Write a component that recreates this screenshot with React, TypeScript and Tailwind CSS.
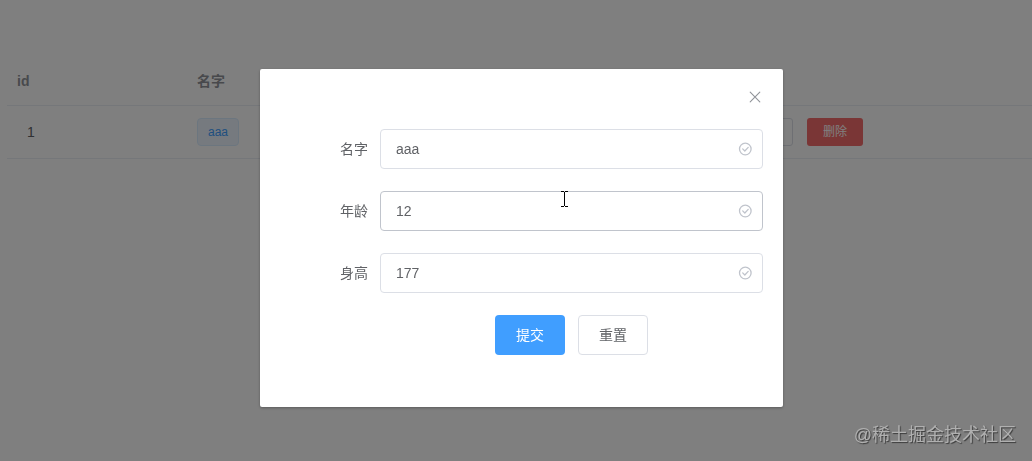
import { useState } from 'react';

type Person = {
  id: number;
  name: string;
  age: string;
  height: string;
};

type FieldKey = 'name' | 'age' | 'height';

const fields: { key: FieldKey; label: string; active?: boolean }[] = [
  { key: 'name', label: '名字' },
  { key: 'age', label: '年龄', active: true },
  { key: 'height', label: '身高' },
];

const people: Person[] = [{ id: 1, name: 'aaa', age: '12', height: '177' }];

function CloseIcon() {
  return (
    <svg width="12" height="12" viewBox="0 0 12 12" fill="none" stroke="currentColor" strokeWidth="1.1" strokeLinecap="round">
      <path d="M1.2 1.2l9.6 9.6M10.8 1.2L1.2 10.8" />
    </svg>
  );
}

function CircleCheckIcon() {
  return (
    <svg width="14" height="14" viewBox="0 0 14 14" fill="none" stroke="currentColor" strokeLinecap="round" strokeLinejoin="round">
      <circle cx="7.3" cy="7" r="5.8" strokeWidth="1.3" />
      <path d="M4.7 6.9l2.1 2.1 3.4-3.6" strokeWidth="1.3" />
    </svg>
  );
}

function TextCursor() {
  return (
    <svg width="7" height="16" viewBox="0 0 7 16" className="pointer-events-none absolute top-0 left-[181px]" shapeRendering="crispEdges">
      <path d="M0 0h3v1H0zM4 0h3v1H4zM3 1h1v14H3zM0 15h3v1H0zM4 15h3v1H4z" fill="#000" />
    </svg>
  );
}

function PeopleTable() {
  return (
    <table className="w-full table-fixed border-collapse text-left text-[#606266]">
      <thead>
        <tr className="border-b border-[#ebeef5] text-[#909399]">
          <th className="w-[180px] px-2.5 py-3 leading-6">id</th>
          <th className="w-[180px] px-2.5 py-3 leading-6">名字</th>
          <th className="w-[180px] px-2.5 py-3 leading-6">年龄</th>
          <th className="w-[180px] px-2.5 py-3 leading-6">身高</th>
          <th className="px-2.5 py-3 leading-6">操作</th>
        </tr>
      </thead>
      <tbody>
        {people.map((person) => (
          <tr key={person.id} className="border-b border-[#ebeef5]">
            <td className="py-3 pr-2.5 pl-5 leading-6">{person.id}</td>
            <td className="px-2.5 py-3">
              <span className="inline-flex h-7 items-center rounded border border-[#d9ecff] bg-[#ecf5ff] px-2.5 text-xs text-[#409eff]">
                {person.name}
              </span>
            </td>
            <td className="px-2.5 py-3">{person.age}</td>
            <td className="px-2.5 py-3">{person.height}</td>
            <td className="px-2.5 py-3">
              <div className="flex gap-3.5">
                <button type="button" className="h-7 w-14 rounded-[3px] border border-[#dcdfe6] bg-white text-xs">
                  编辑
                </button>
                <button type="button" className="h-7 w-14 rounded-[3px] bg-[#f56c6c] text-xs text-white">
                  删除
                </button>
              </div>
            </td>
          </tr>
        ))}
      </tbody>
    </table>
  );
}

function EditDialog({ person }: { person: Person }) {
  const [form, setForm] = useState<Person>(person);

  return (
    <div
      role="dialog"
      aria-modal="true"
      aria-label="编辑"
      className="relative w-full rounded-xs bg-white px-5 pt-[60px] pb-[52px] shadow-[0_1px_3px_rgba(0,0,0,0.3)]"
    >
      <button type="button" aria-label="关闭" className="absolute top-[22px] right-[22px] text-[#909399]">
        <CloseIcon />
      </button>

      <form className="flex flex-col gap-[22px]" onSubmit={(e) => e.preventDefault()}>
        {fields.map((field) => (
          <div key={field.key} className="flex items-center">
            <label htmlFor={field.key} className="w-25 shrink-0 pr-3 text-right">
              {field.label}
            </label>
            <div className="relative flex-1">
              <input
                id={field.key}
                type="text"
                value={form[field.key]}
                onChange={(e) => setForm({ ...form, [field.key]: e.target.value })}
                className={`h-10 w-full rounded border bg-white pr-8 pl-[15px] outline-none ${
                  field.active ? 'border-[#c0c4cc]' : 'border-[#dcdfe6]'
                }`}
              />
              <span className="pointer-events-none absolute inset-y-0 right-[11px] flex items-center text-[#c0c4cc]">
                <CircleCheckIcon />
              </span>
              {field.active && <TextCursor />}
            </div>
          </div>
        ))}

        <div className="ml-25">
          <div className="ml-[30%] flex gap-[13px]">
            <button type="submit" className="h-10 w-[70px] rounded bg-[#409eff] text-white">
              提交
            </button>
            <button
              type="button"
              onClick={() => setForm(person)}
              className="h-10 w-[70px] rounded border border-[#dcdfe6] bg-white"
            >
              重置
            </button>
          </div>
        </div>
      </form>
    </div>
  );
}

export default function App() {
  return (
    <div className="min-h-screen bg-white font-['Liberation_Sans','Noto_Sans_CJK_SC',sans-serif] text-sm text-[#606266]">
      <main className="overflow-hidden pt-[57px] pl-[7px]">
        <PeopleTable />
      </main>

      {/* 遮罩层 */}
      <div className="fixed inset-0 overflow-auto bg-black/50 pt-[69px] pr-[249px] pl-[260px]">
        <EditDialog person={people[0]} />
      </div>

      <p className="fixed right-4 bottom-3.5 text-lg leading-6 text-[#b0b0b0] [text-shadow:1px_1px_1px_rgba(0,0,0,0.55)]">
        @稀土掘金技术社区
      </p>
    </div>
  );
}
